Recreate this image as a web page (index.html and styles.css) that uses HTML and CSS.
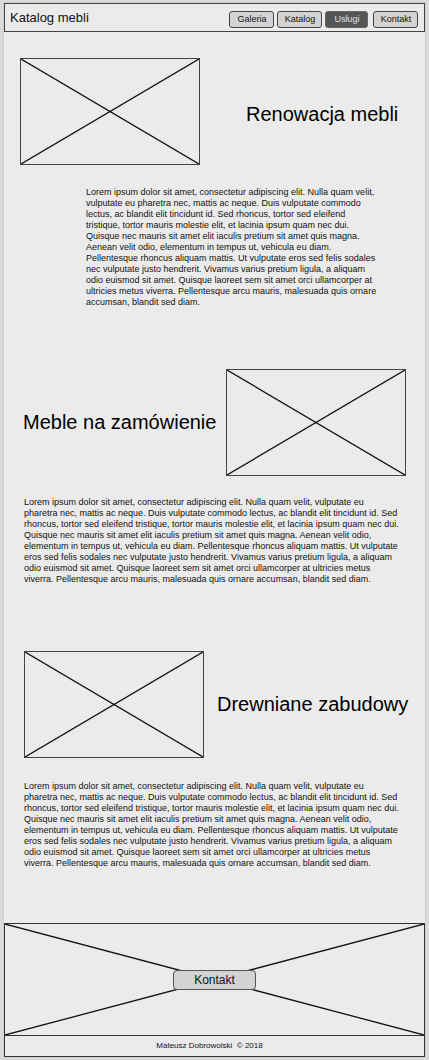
FILE: index.html
```html
<!DOCTYPE html>
<html lang="pl">
<head>
<meta charset="utf-8">
<meta name="viewport" content="width=device-width, initial-scale=1">
<title>Katalog mebli</title>
<link rel="stylesheet" href="styles.css">
</head>
<body>
<div class="sheet">
  <header class="topbar">
    <h1 class="brand">Katalog mebli</h1>
    <nav class="nav">
      <a class="nav-link" href="#galeria">Galeria</a>
      <a class="nav-link" href="#katalog">Katalog</a>
      <a class="nav-link nav-link-active" href="#uslugi" aria-current="page">Usługi</a>
      <a class="nav-link" href="#kontakt">Kontakt</a>
    </nav>
  </header>

  <main class="services">
    <section class="service service-renovation">
      <div class="service-head">
        <svg class="picture" role="img" aria-label="Renowacja mebli" preserveAspectRatio="none" viewBox="0 0 180 107"><path d="M0 0L180 107M180 0L0 107"/></svg>
        <h2 class="service-title">Renowacja mebli</h2>
      </div>
      <p class="service-text">Lorem ipsum dolor sit amet, consectetur adipiscing elit. Nulla quam velit, vulputate eu pharetra nec, mattis ac neque. Duis vulputate commodo lectus, ac blandit elit tincidunt id. Sed rhoncus, tortor sed eleifend tristique, tortor mauris molestie elit, et lacinia ipsum quam nec dui. Quisque nec mauris sit amet elit iaculis pretium sit amet quis magna. Aenean velit odio, elementum in tempus ut, vehicula eu diam. Pellentesque rhoncus aliquam mattis. Ut vulputate eros sed felis sodales nec vulputate justo hendrerit. Vivamus varius pretium ligula, a aliquam odio euismod sit amet. Quisque laoreet sem sit amet orci ullamcorper at ultricies metus viverra. Pellentesque arcu mauris, malesuada quis ornare accumsan, blandit sed diam.</p>
    </section>

    <section class="service service-custom">
      <div class="service-head">
        <h2 class="service-title">Meble na zamówienie</h2>
        <svg class="picture" role="img" aria-label="Meble na zamówienie" preserveAspectRatio="none" viewBox="0 0 180 107"><path d="M0 0L180 107M180 0L0 107"/></svg>
      </div>
      <p class="service-text">Lorem ipsum dolor sit amet, consectetur adipiscing elit. Nulla quam velit, vulputate eu pharetra nec, mattis ac neque. Duis vulputate commodo lectus, ac blandit elit tincidunt id. Sed rhoncus, tortor sed eleifend tristique, tortor mauris molestie elit, et lacinia ipsum quam nec dui. Quisque nec mauris sit amet elit iaculis pretium sit amet quis magna. Aenean velit odio, elementum in tempus ut, vehicula eu diam. Pellentesque rhoncus aliquam mattis. Ut vulputate eros sed felis sodales nec vulputate justo hendrerit. Vivamus varius pretium ligula, a aliquam odio euismod sit amet. Quisque laoreet sem sit amet orci ullamcorper at ultricies metus viverra. Pellentesque arcu mauris, malesuada quis ornare accumsan, blandit sed diam.</p>
    </section>

    <section class="service service-builtin">
      <div class="service-head">
        <svg class="picture" role="img" aria-label="Drewniane zabudowy" preserveAspectRatio="none" viewBox="0 0 180 107"><path d="M0 0L180 107M180 0L0 107"/></svg>
        <h2 class="service-title">Drewniane zabudowy</h2>
      </div>
      <p class="service-text">Lorem ipsum dolor sit amet, consectetur adipiscing elit. Nulla quam velit, vulputate eu pharetra nec, mattis ac neque. Duis vulputate commodo lectus, ac blandit elit tincidunt id. Sed rhoncus, tortor sed eleifend tristique, tortor mauris molestie elit, et lacinia ipsum quam nec dui. Quisque nec mauris sit amet elit iaculis pretium sit amet quis magna. Aenean velit odio, elementum in tempus ut, vehicula eu diam. Pellentesque rhoncus aliquam mattis. Ut vulputate eros sed felis sodales nec vulputate justo hendrerit. Vivamus varius pretium ligula, a aliquam odio euismod sit amet. Quisque laoreet sem sit amet orci ullamcorper at ultricies metus viverra. Pellentesque arcu mauris, malesuada quis ornare accumsan, blandit sed diam.</p>
    </section>
  </main>

  <section class="contact" id="kontakt">
    <svg class="contact-picture" aria-hidden="true" preserveAspectRatio="none" viewBox="0 0 419 111"><path d="M0 0L419 111M419 0L0 111"/></svg>
    <a class="contact-link" href="#kontakt">Kontakt</a>
  </section>
  <footer class="footer">Mateusz Dobrowolski &nbsp;© 2018</footer>
</div>
</body>
</html>
```

FILE: styles.css
```css
* {
  box-sizing: border-box;
}

body {
  margin: 0;
  padding: 3px 4px;
  background: #dadada;
  color: #111;
  font-family: "Liberation Sans", Arial, sans-serif;
  font-size: 9px;
  line-height: 11px;
}

h1,
h2,
p {
  margin: 0;
  font-weight: 400;
}

a {
  color: inherit;
  text-decoration: none;
}

.sheet {
  background: #ebebeb;
  box-shadow: 0 0 0 1px #cfcfcf;
}

.topbar {
  display: flex;
  align-items: center;
  justify-content: space-between;
  padding: 6px 6px 2px 5px;
  border: 1px solid #444;
}

.brand {
  padding-bottom: 3px;
  font-size: 13px;
  line-height: 16px;
}

.nav {
  display: flex;
  gap: 3px;
}

.nav-link {
  width: 45px;
  padding: 1px 0 2px 1px;
  border: 1px solid #444;
  border-radius: 3px;
  background: #d3d3d3;
  line-height: 12px;
  text-align: center;
}

.nav-link-active {
  width: 43px;
  margin-right: 2px;
  border-color: #666;
  background: #555;
  color: #e0e0e0;
}

.services {
  padding: 26px 16px 54px;
}

.service-head {
  display: flex;
  align-items: center;
}

.picture {
  flex: none;
  width: 180px;
  height: 107px;
  border: 1px solid #444;
}

.picture path,
.contact-picture path {
  fill: none;
  stroke: #111;
  stroke-width: 1.3;
  vector-effect: non-scaling-stroke;
}

.service-title {
  flex: 1;
  padding-bottom: 2px;
  color: #000;
  font-size: 20px;
  line-height: 24px;
  white-space: nowrap;
}

.service-text {
  padding: 22px 10px 0 4px;
}

.service-renovation .service-title {
  padding: 4px 0 0 46px;
}

.service-renovation .service-text {
  padding-left: 66px;
  padding-right: 29px;
}

.service-custom {
  margin-top: 61px;
}

.service-custom .service-head {
  padding: 0 3px;
}

.service-custom .service-text {
  padding-top: 21px;
}

.service-builtin {
  margin-top: 66px;
}

.service-builtin .service-head {
  padding-left: 4px;
}

.service-builtin .service-title {
  padding-left: 13px;
}

.service-builtin .service-text {
  padding-top: 23px;
}

.contact {
  display: grid;
  place-items: center;
  border: 1px solid #333;
}

.contact-picture,
.contact-link {
  grid-area: 1 / 1;
}

.contact-picture {
  display: block;
  width: 100%;
  height: 111px;
}

.contact-link {
  z-index: 1;
  padding: 1px 20px;
  border: 1px solid #555;
  border-radius: 4px;
  background: #d3d3d3;
  font-size: 12px;
  line-height: 16px;
}

.footer {
  padding: 4px 10px 5px 0;
  border: 1px solid #333;
  border-top: 0;
  font-size: 8px;
  text-align: center;
}
```
